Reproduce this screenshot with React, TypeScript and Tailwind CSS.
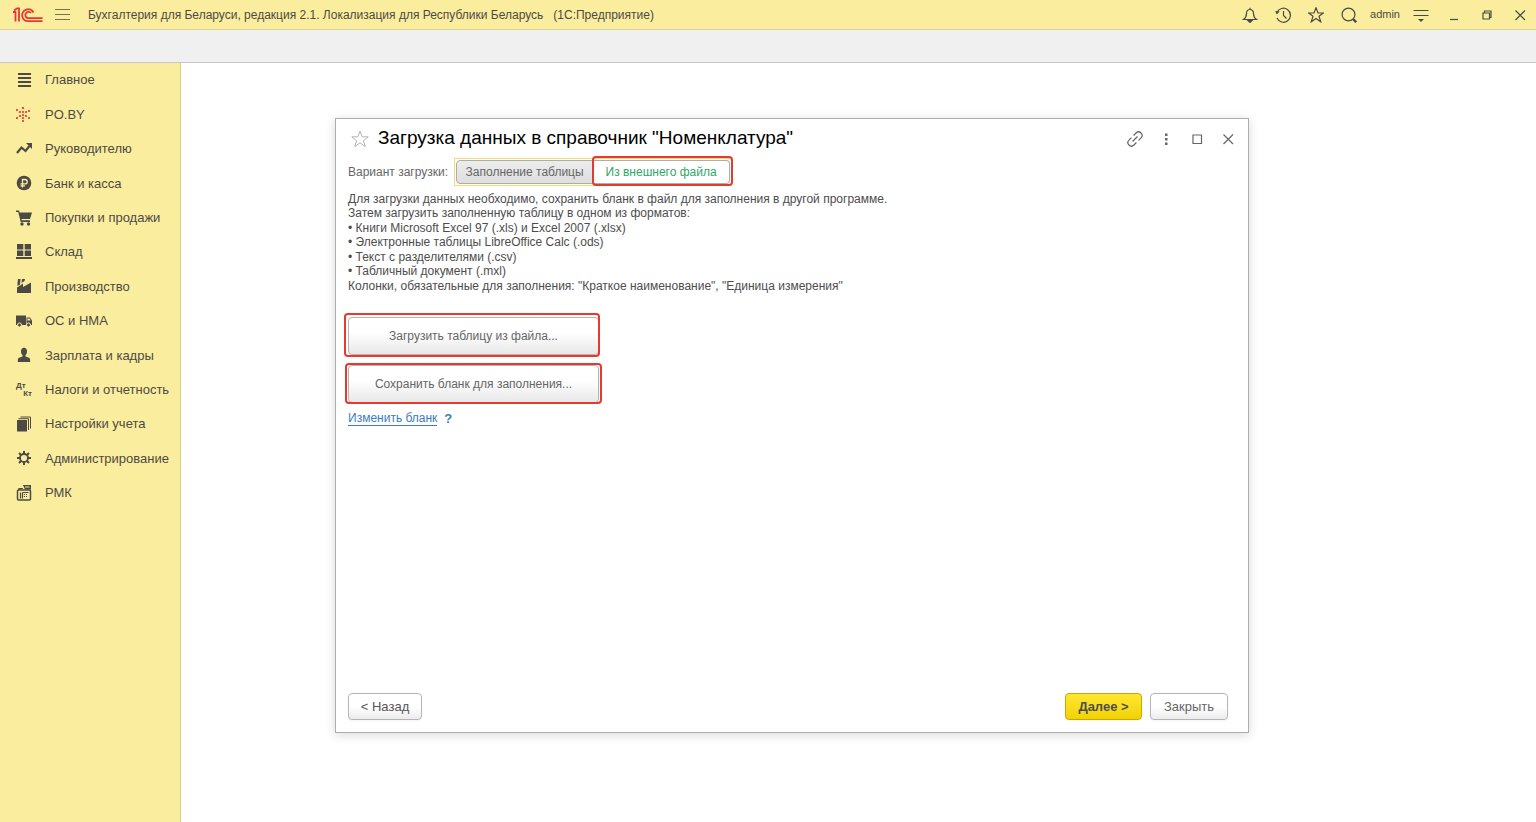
import type { ReactNode } from "react";

type MenuItem = {
    label: string;
    icon: ReactNode;
};

const Icon = ({ children }: { children: ReactNode }) => (
    <svg className="h-4 w-4 shrink-0" viewBox="0 0 16 16" fill="#4d4a45" aria-hidden="true">
        {children}
    </svg>
);

const poDots = [
    [1, 3], [1, 11], [4, 5], [4, 9], [7, 1], [7, 5], [7, 8],
    [7, 11], [7, 14], [10, 5], [10, 9], [13, 4], [13, 11],
];

const menu: MenuItem[] = [
    {
        label: "Главное",
        icon: (
            <Icon>
                <path d="M2 1h13v2H2zM2 5h13v2H2zM2 9h13v2H2zM2 13h13v2H2z" />
            </Icon>
        ),
    },
    {
        label: "PO.BY",
        icon: (
            <Icon>
                {poDots.map(([x, y]) => (
                    <circle key={`${x}-${y}`} cx={x} cy={y} r="1.1" fill="#e8352e" />
                ))}
            </Icon>
        ),
    },
    {
        label: "Руководителю",
        icon: (
            <Icon>
                <path d="M1 12l4.500-5.500 4 3.500 4-5" fill="none" stroke="#4d4a45" strokeWidth="2.200" />
                <path d="M10 2h6v6z" />
            </Icon>
        ),
    },
    {
        label: "Банк и касса",
        icon: (
            <Icon>
                <circle cx="8" cy="8" r="7.300" />
                <path d="M6.500 12.500V4.500H9a2.200 2.200 0 0 1 0 4.400H4.500M4.500 10.900H9" fill="none" stroke="#fbed9e" strokeWidth="1.300" />
            </Icon>
        ),
    },
    {
        label: "Покупки и продажи",
        icon: (
            <Icon>
                <path d="M0 .5h3l.6 2H16l-2 6.500H5.500l.3 1.200H14V12H4.700L2.200 2H0z" />
                <circle cx="6" cy="14" r="1.700" />
                <circle cx="12.500" cy="14" r="1.700" />
            </Icon>
        ),
    },
    {
        label: "Склад",
        icon: (
            <Icon>
                <path d="M1 0h6.300v5.500H1zM8.700 0H15v5.500H8.700zM1 6.500h6.300V12H1zM8.700 6.500H15V12H8.700zM0 13h16v2H0z" />
            </Icon>
        ),
    },
    {
        label: "Производство",
        icon: (
            <Icon>
                <path d="M1 15V9.500l6-4v3.500l8-4.500V15zM1.500 8V5L2 1h2.500l-.5 5.500zM5.500 5l.5-4h3l-.5 2z" />
            </Icon>
        ),
    },
    {
        label: "ОС и НМА",
        icon: (
            <Icon>
                <path d="M0 2.500h10V12H0zM10.500 4.500H14l2 3V12h-5.500z" />
                <path d="M11.500 5.500h2l1.200 2h-3.200z" fill="#fbed9e" />
                <circle cx="3.500" cy="12" r="2" stroke="#fbed9e" />
                <circle cx="12.500" cy="12" r="2" stroke="#fbed9e" />
            </Icon>
        ),
    },
    {
        label: "Зарплата и кадры",
        icon: (
            <Icon>
                <ellipse cx="8" cy="4.500" rx="3" ry="3.800" />
                <path d="M6.500 7h3v2.500l3.500 1.200c1 .5 1.200 1.500 1.200 4.300H1.800c0-2.800.2-3.800 1.200-4.300l3.500-1.200z" />
            </Icon>
        ),
    },
    {
        label: "Налоги и отчетность",
        icon: (
            <span className="flex h-4 w-4 shrink-0 flex-col text-[8px] leading-[8px] font-bold" aria-hidden="true">
                <span>Дт</span>
                <span className="self-end">Кт</span>
            </span>
        ),
    },
    {
        label: "Настройки учета",
        icon: (
            <Icon>
                <path d="M1 4h10v11.500H1z" />
                <path d="M2.500 2.700h10V14M4.500 1h10v11.500" fill="none" stroke="#4d4a45" />
            </Icon>
        ),
    },
    {
        label: "Администрирование",
        icon: (
            <Icon>
                <circle cx="8" cy="8" r="4" fill="none" stroke="#4d4a45" strokeWidth="1.800" />
                <path
                    d="M8 1v3M8 12v3M1 8h3M12 8h3M3 3l2.200 2.200M10.800 10.800L13 13M3 13l2.200-2.200M10.800 5.200L13 3"
                    stroke="#4d4a45"
                    strokeWidth="2"
                />
            </Icon>
        ),
    },
    {
        label: "РМК",
        icon: (
            <Icon>
                <path d="M7 0h8v4.500H9z" />
                <path d="M9 2h4.500" stroke="#fbed9e" />
                <rect x="1.500" y="5" width="13" height="10" rx="1" fill="none" stroke="#4d4a45" strokeWidth="1.500" />
                <path d="M3 5V3.500h4M4.500 7.500v6M6.500 7.500h6M6.500 7.500v6" fill="none" stroke="#4d4a45" strokeWidth="1.200" />
                <path d="M8 9.500h4M8 11.500h4" stroke="#4d4a45" strokeDasharray="1 1" />
            </Icon>
        ),
    },
];

const instructions = [
    "Для загрузки данных необходимо, сохранить бланк в файл для заполнения в другой программе.",
    "Затем загрузить заполненную таблицу в одном из форматов:",
    "• Книги Microsoft Excel 97 (.xls) и Excel 2007 (.xlsx)",
    "• Электронные таблицы LibreOffice Calc (.ods)",
    "• Текст с разделителями (.csv)",
    "• Табличный документ (.mxl)",
    'Колонки, обязательные для заполнения: "Краткое наименование", "Единица измерения"',
];

const IconButton = ({ label, children }: { label: string; children: ReactNode }) => (
    <button type="button" aria-label={label} className="flex h-4 w-4 items-center justify-center">
        <svg className="h-4 w-4 shrink-0" viewBox="0 0 16 16" fill="none" stroke="currentColor" strokeWidth="1.2" aria-hidden="true">
            {children}
        </svg>
    </button>
);

const Highlight = ({ className }: { className: string }) => (
    <span className={`pointer-events-none absolute rounded-sm border-2 border-[#e53a2f] ${className}`} />
);

const TopBar = () => (
    <header className="flex h-[30px] items-center border-b border-[#ded397] bg-[#fbed9e] pr-2 pl-[13px] text-[#4d4a45]">
        <svg className="h-4 w-[30px]" viewBox="0 0 30 16" fill="none" stroke="#e8352e" strokeWidth="1.8" aria-label="1C">
            <path d="M0 5h2.500v9.500M1 3.500L4 1.300h2V14.500" />
            <path d="M20.500 5.500A6 6 0 1 0 15.500 14.200H29.500" />
            <path d="M18 6A3.200 3.200 0 1 0 15.500 11.200H29.500" />
        </svg>
        <button type="button" aria-label="Меню" className="ml-3 flex w-[15px] flex-col gap-1">
            <span className="h-px bg-[#77714f]" />
            <span className="h-px bg-[#77714f]" />
            <span className="h-px bg-[#77714f]" />
        </button>
        <h1 className="ml-[18px] text-[12px] whitespace-pre">
            Бухгалтерия для Беларуси, редакция 2.1. Локализация для Республики Беларусь   (1С:Предприятие)
        </h1>
        <div className="ml-auto flex items-center gap-[17px]">
            <IconButton label="Уведомления">
                <path d="M1.500 12.500h13c-2-1.500-3-3-3-6C11.500 4 10 2.500 8 2.500S4.500 4 4.500 6.500c0 3-1 4.500-3 6zM8 2.500V.8" />
                <path d="M6 13.500h4l-2 2z" fill="currentColor" />
            </IconButton>
            <IconButton label="История">
                <path d="M2 5.500A7 7 0 1 1 2 11M8.500 4v4.500l3 3" />
                <path d="M.2 4l4.500.5-3 3z" fill="currentColor" stroke="none" />
            </IconButton>
            <IconButton label="Избранное">
                <path d="M8 .8l2 5.200h5.300L11 9.300l1.700 5.500L8 11.500l-4.700 3.300L5 9.300.7 6H6z" />
            </IconButton>
            <IconButton label="Поиск">
                <circle cx="7.500" cy="7.500" r="6.400" />
                <path d="M12 12l3.200 3.200" strokeWidth="2.400" />
            </IconButton>
            <span className="-mx-1 text-[11px]">admin</span>
            <IconButton label="Сервис">
                <path d="M.5 3.500h15M.5 8.500h15" />
                <path d="M5 12h6l-3 3z" fill="currentColor" stroke="none" />
            </IconButton>
            <IconButton label="Свернуть">
                <path d="M4 12.500h8" />
            </IconButton>
            <IconButton label="Развернуть">
                <path d="M4 6h6.500v6H4zM5.500 6V4H12v6.500h-1.500" />
            </IconButton>
            <IconButton label="Выход">
                <path d="M3.500 3.500l9.500 9.500M13 3.500L3.500 13" />
            </IconButton>
        </div>
    </header>
);

const Sidebar = () => (
    <nav className="w-[181px] shrink-0 border-r border-[#d3ca94] bg-[#fbed9e]">
        <ul className="grid h-[447px] auto-rows-fr">
            {menu.map((item) => (
                <li key={item.label} className="flex">
                    <a href="#" className="flex flex-1 items-center gap-[13px] pl-4 text-[13px] whitespace-nowrap text-[#4d4a45]">
                        {item.icon}
                        {item.label}
                    </a>
                </li>
            ))}
        </ul>
    </nav>
);

const ImportDialog = () => (
    <section className="mt-[55px] mr-[287px] mb-[89px] ml-[154px] flex flex-1 flex-col border border-[#adadad] px-3 pb-3 text-[12px] text-[#4d4d4d] shadow-[0_2px_10px_rgba(0,0,0,0.15)]">
        <div className="flex h-[39px] items-center">
            <button type="button" aria-label="В избранное" className="ml-[2px] text-[#b5b5b5]">
                <svg className="h-5 w-5" viewBox="0 0 20 20" fill="none" stroke="currentColor" aria-hidden="true">
                    <path d="M10 2l2.200 5.800h6l-4.800 3.800 1.900 6L10 14l-5.300 3.600 1.900-6L1.800 7.800h6z" />
                </svg>
            </button>
            <h2 className="ml-2 text-[19px] text-black">Загрузка данных в справочник "Номенклатура"</h2>
            <div className="ml-auto flex gap-[15px] text-[#666]">
                <IconButton label="Получить ссылку">
                    <g transform="rotate(-45 8 8)">
                        <path d="M6.500 4.500H3a3.500 3.500 0 0 0 0 7h3.500M9.500 4.500H13a3.500 3.500 0 0 1 0 7H9.500M4.500 8h7" />
                    </g>
                </IconButton>
                <IconButton label="Ещё">
                    <path d="M7 2.500h2.500V5H7zM7 7h2.500v2.500H7zM7 11.500h2.500V14H7z" fill="currentColor" stroke="none" />
                </IconButton>
                <IconButton label="Развернуть окно">
                    <path d="M4 4h8.500v8.500H4z" />
                </IconButton>
                <IconButton label="Закрыть окно">
                    <path d="M3.500 3.500l9.500 9.500M13 3.500L3.500 13" />
                </IconButton>
            </div>
        </div>

        <div className="flex items-center">
            <span className="text-[#666]">Вариант загрузки:</span>
            <div className="ml-[6px] flex border border-[#f9dd6a] p-px" role="group" aria-label="Вариант загрузки">
                <button type="button" aria-pressed="false" className="h-6 w-[137px] rounded-l-sm border border-[#adadad] bg-linear-to-b from-[#ededed] to-[#dedede] text-[#666] whitespace-nowrap">
                    Заполнение таблицы
                </button>
                <div className="relative">
                    <button type="button" aria-pressed="true" className="h-6 w-[137px] rounded-r-sm border border-l-0 border-[#adadad] bg-white text-[#2fa866] whitespace-nowrap">
                        Из внешнего файла
                    </button>
                    <Highlight className="-top-1 -right-[3px] -bottom-[2px] -left-px" />
                </div>
            </div>
        </div>

        <div className="mt-[6px] grid h-[101px] auto-rows-fr">
            {instructions.map((line) => (
                <p key={line} className="leading-[14px]">
                    {line}
                </p>
            ))}
        </div>

        <div className="mt-6 flex flex-col items-start gap-[10px]">
            <div className="relative">
                <button type="button" className="h-[38px] w-[251px] rounded-sm border border-[#b5b5b5] bg-linear-to-b from-white from-40% to-[#e8e8e8] text-[#666]">
                    Загрузить таблицу из файла...
                </button>
                <Highlight className="-top-1 -right-px -bottom-[2px] -left-1" />
            </div>
            <div className="relative">
                <button type="button" className="h-[38px] w-[251px] rounded-sm border border-[#b5b5b5] bg-linear-to-b from-white from-40% to-[#e8e8e8] text-[#666]">
                    Сохранить бланк для заполнения...
                </button>
                <Highlight className="-top-[2px] -right-[3px] -bottom-px -left-[3px]" />
            </div>
        </div>

        <div className="mt-[6px] flex items-center gap-[7px] text-[#3b7cc0]">
            <a href="#" className="border-b border-[#3b7cc0] leading-[14px]">
                Изменить бланк
            </a>
            <button type="button" aria-label="Справка" className="text-[13px] font-bold">
                ?
            </button>
        </div>

        <div className="mt-auto flex gap-2 pr-2 text-[13px]">
            <button type="button" className="h-[27px] w-[74px] rounded-sm border border-[#b5b5b5] bg-linear-to-b from-white from-50% to-[#ececec] text-[#555] shadow-xs">
                &lt; Назад
            </button>
            <button type="button" className="ml-auto h-[27px] w-[77px] rounded-sm border border-[#c9a800] bg-linear-to-b from-[#ffe62e] to-[#f2d300] font-bold shadow-xs">
                Далее &gt;
            </button>
            <button type="button" className="h-[27px] w-[78px] rounded-sm border border-[#b5b5b5] bg-linear-to-b from-white from-50% to-[#ececec] text-[#666] shadow-xs">
                Закрыть
            </button>
        </div>
    </section>
);

const App = () => {
    return (
        <div className="flex min-h-screen flex-col bg-white font-['Liberation_Sans',Arial,sans-serif]">
            <TopBar />
            <div className="h-[33px] border-b border-[#c8c8c8] bg-[#f0f0f0]" />
            <div className="flex flex-1">
                <Sidebar />
                <main className="flex flex-1 flex-col">
                    <ImportDialog />
                </main>
            </div>
        </div>
    );
};

export default App;
